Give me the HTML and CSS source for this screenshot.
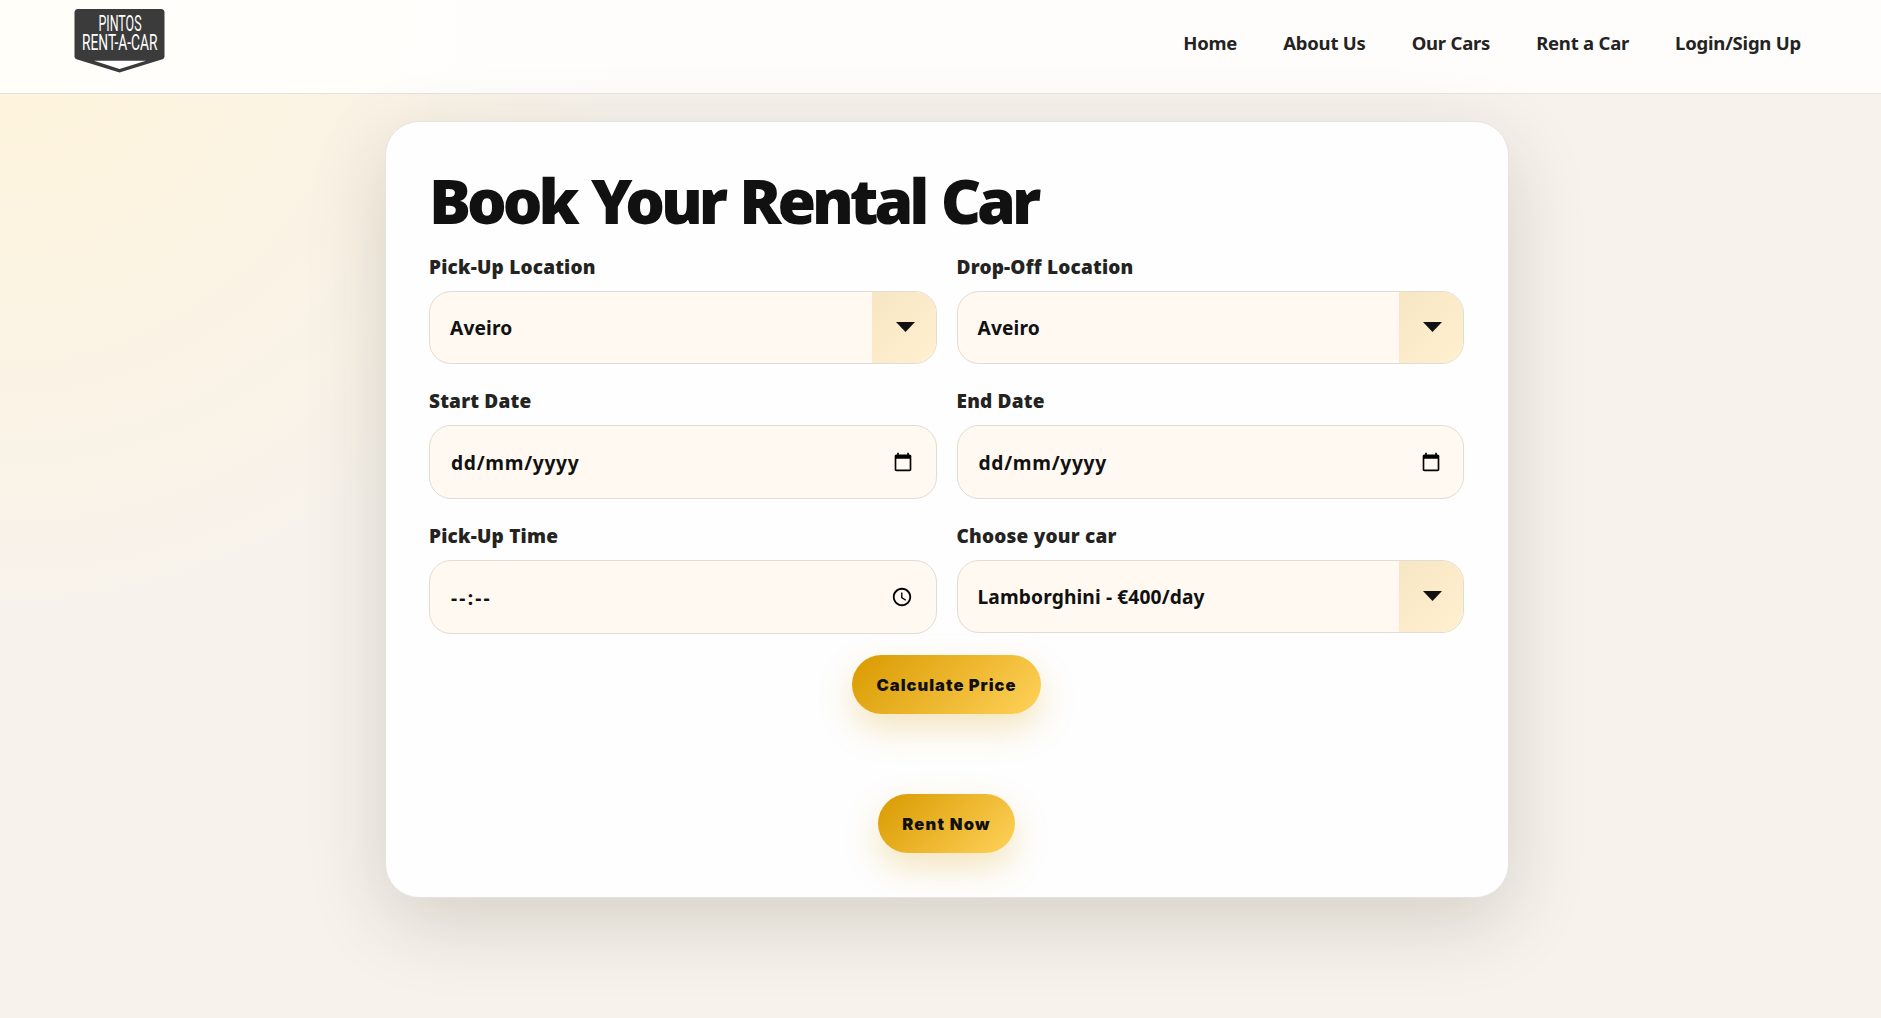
FILE: index.html
```html
<!DOCTYPE html>
<html lang="en">
<head>
<meta charset="utf-8">
<title>Pintos Rent-a-Car</title>
<link rel="stylesheet" href="styles.css">
</head>
<body>
<header class="header">
  <a class="logo" href="#">
    <svg width="92" height="66" viewBox="0 0 92 66" role="img" aria-label="Pintos Rent-a-Car">
      <path class="logo-shape" d="M4 1h83q3.500 0 3.500 3.500v44q0 2-2 2.700L45.500 64.500 2.500 51.200q-2-.7-2-2.700V4.500Q.5 1 4 1z"/>
      <path class="logo-notch" d="M20 52.700h52L45.500 61z"/>
      <text class="logo-text" x="24.500" y="23.300" textLength="43" lengthAdjust="spacingAndGlyphs">PINTOS</text>
      <text class="logo-text" x="8" y="42.300" textLength="75.500" lengthAdjust="spacingAndGlyphs">RENT-A-CAR</text>
    </svg>
  </a>
  <nav class="nav">
    <a href="#">Home</a>
    <a href="#">About Us</a>
    <a href="#">Our Cars</a>
    <a href="#">Rent a Car</a>
    <a href="#">Login/Sign Up</a>
  </nav>
</header>
<main class="card">
  <h1 class="title">Book Your Rental Car</h1>
  <form class="form">
    <div class="field">
      <span class="label">Pick-Up Location</span>
      <div class="control select"><span>Aveiro</span><span class="arrow"><svg width="19" height="10" viewBox="0 0 19 10"><path d="M0 0h19L9.500 10z"/></svg></span></div>
    </div>
    <div class="field">
      <span class="label">Drop-Off Location</span>
      <div class="control select"><span>Aveiro</span><span class="arrow"><svg width="19" height="10" viewBox="0 0 19 10"><path d="M0 0h19L9.500 10z"/></svg></span></div>
    </div>
    <div class="field">
      <span class="label">Start Date</span>
      <div class="control picker"><span>dd/mm/yyyy</span><svg width="20" height="20" viewBox="0 0 24 24"><path d="M20 3h-1V1h-2v2H7V1H5v2H4c-1.100 0-2 .9-2 2v16c0 1.100.9 2 2 2h16c1.100 0 2-.9 2-2V5c0-1.100-.9-2-2-2zm0 18H4V8h16v13z"/></svg></div>
    </div>
    <div class="field">
      <span class="label">End Date</span>
      <div class="control picker"><span>dd/mm/yyyy</span><svg width="20" height="20" viewBox="0 0 24 24"><path d="M20 3h-1V1h-2v2H7V1H5v2H4c-1.100 0-2 .9-2 2v16c0 1.100.9 2 2 2h16c1.100 0 2-.9 2-2V5c0-1.100-.9-2-2-2zm0 18H4V8h16v13z"/></svg></div>
    </div>
    <div class="field">
      <span class="label">Pick-Up Time</span>
      <div class="control picker time"><span>--:--</span><svg width="22" height="22" viewBox="0 0 24 24"><path d="M11.990 2C6.470 2 2 6.480 2 12s4.470 10 9.990 10C17.520 22 22 17.520 22 12S17.520 2 11.990 2zM12 20c-4.420 0-8-3.580-8-8s3.580-8 8-8 8 3.580 8 8-3.580 8-8 8zM12.500 7H11v6l4.700 3.200.9-1.300-4.100-2.700z"/></svg></div>
    </div>
    <div class="field">
      <span class="label">Choose your car</span>
      <div class="control select"><span>Lamborghini - €400/day</span><span class="arrow"><svg width="19" height="10" viewBox="0 0 19 10"><path d="M0 0h19L9.500 10z"/></svg></span></div>
    </div>
  </form>
  <div class="actions">
    <button class="button" type="button">Calculate Price</button>
    <button class="button rent" type="button">Rent Now</button>
  </div>
</main>
</body>
</html>
```
FILE: styles.css
```css
* { box-sizing: border-box; }

body {
  margin: 0;
  min-height: 1018px;
  font-family: "Noto Sans", "Open Sans", sans-serif;
  color: #111;
  background: radial-gradient(circle at top left, #fff4da 0, rgba(255, 244, 218, 0) 640px), #f7f2ec;
}

.header {
  display: flex;
  justify-content: space-between;
  align-items: flex-start;
  height: 94px;
  padding: 8px 80px 0 74px;
  background: rgba(255, 255, 254, .86);
  border-bottom: 1px solid #e4e3df;
}

.logo svg { display: block; }
.logo-shape { fill: #3b3b3b; }
.logo-notch { fill: #fff; }
.logo-text { fill: #fff; font: 400 21.500px Roboto, sans-serif; }

.nav { display: flex; gap: 46px; padding-top: 21px; }
.nav a {
  color: #24231f;
  font-size: 18.500px;
  font-weight: 700;
  line-height: 28px;
  letter-spacing: -.22px;
  text-decoration: none;
}

.card {
  width: 1124px;
  height: 777px;
  margin: 27px 0 0 384.500px;
  padding: 44px 43.500px 0;
  background: #fefefe;
  border: 1px solid #e5e4e1;
  border-radius: 34px;
  box-shadow: 0 24px 80px rgba(40, 36, 10, .16);
}

.title {
  margin: 0;
  font-size: 62.500px;
  font-weight: 900;
  line-height: 68px;
  letter-spacing: -4.100px;
  word-spacing: 3.200px;
  white-space: nowrap;
}

.form {
  display: grid;
  grid-template-columns: 1fr 1fr;
  gap: 20px;
  align-items: start;
  margin-top: 16px;
}

.field { display: flex; flex-direction: column; gap: 7px; }

.label {
  padding-top: 1px;
  font-size: 19px;
  font-weight: 900;
  line-height: 33.300px;
  letter-spacing: .2px;
  color: #24231f;
}

.control {
  display: flex;
  align-items: center;
  justify-content: space-between;
  padding-left: 20px;
  overflow: hidden;
  border: 1px solid #e1ddd4;
  border-radius: 22px;
  background: #fff9f1;
  font-size: 19.200px;
  font-weight: 700;
  letter-spacing: .12px;
}

.select { height: 72.600px; }
.picker { height: 74px; padding: 0 22.500px 0 21px; letter-spacing: .7px; }
.time { letter-spacing: 2.200px; }

.arrow {
  display: flex;
  align-items: center;
  align-self: stretch;
  width: 64px;
  padding: 0 0 2px 24px;
  background: linear-gradient(135deg, #f7e6c3, #fff0d0);
}
.arrow path { fill: #111; }

.actions { display: flex; flex-direction: column; align-items: center; gap: 80px; margin-top: 20.500px; }

.button {
  height: 59px;
  padding: 2px 24.500px 0;
  border: 0;
  border-radius: 30px;
  background: linear-gradient(135deg, #d99a00, #ffd25a);
  box-shadow: 0 14px 34px rgba(217, 154, 0, .26);
  color: #111;
  font: 900 16.500px Inter, sans-serif;
  letter-spacing: 1px;
}
.rent { letter-spacing: 1.200px; }
```
